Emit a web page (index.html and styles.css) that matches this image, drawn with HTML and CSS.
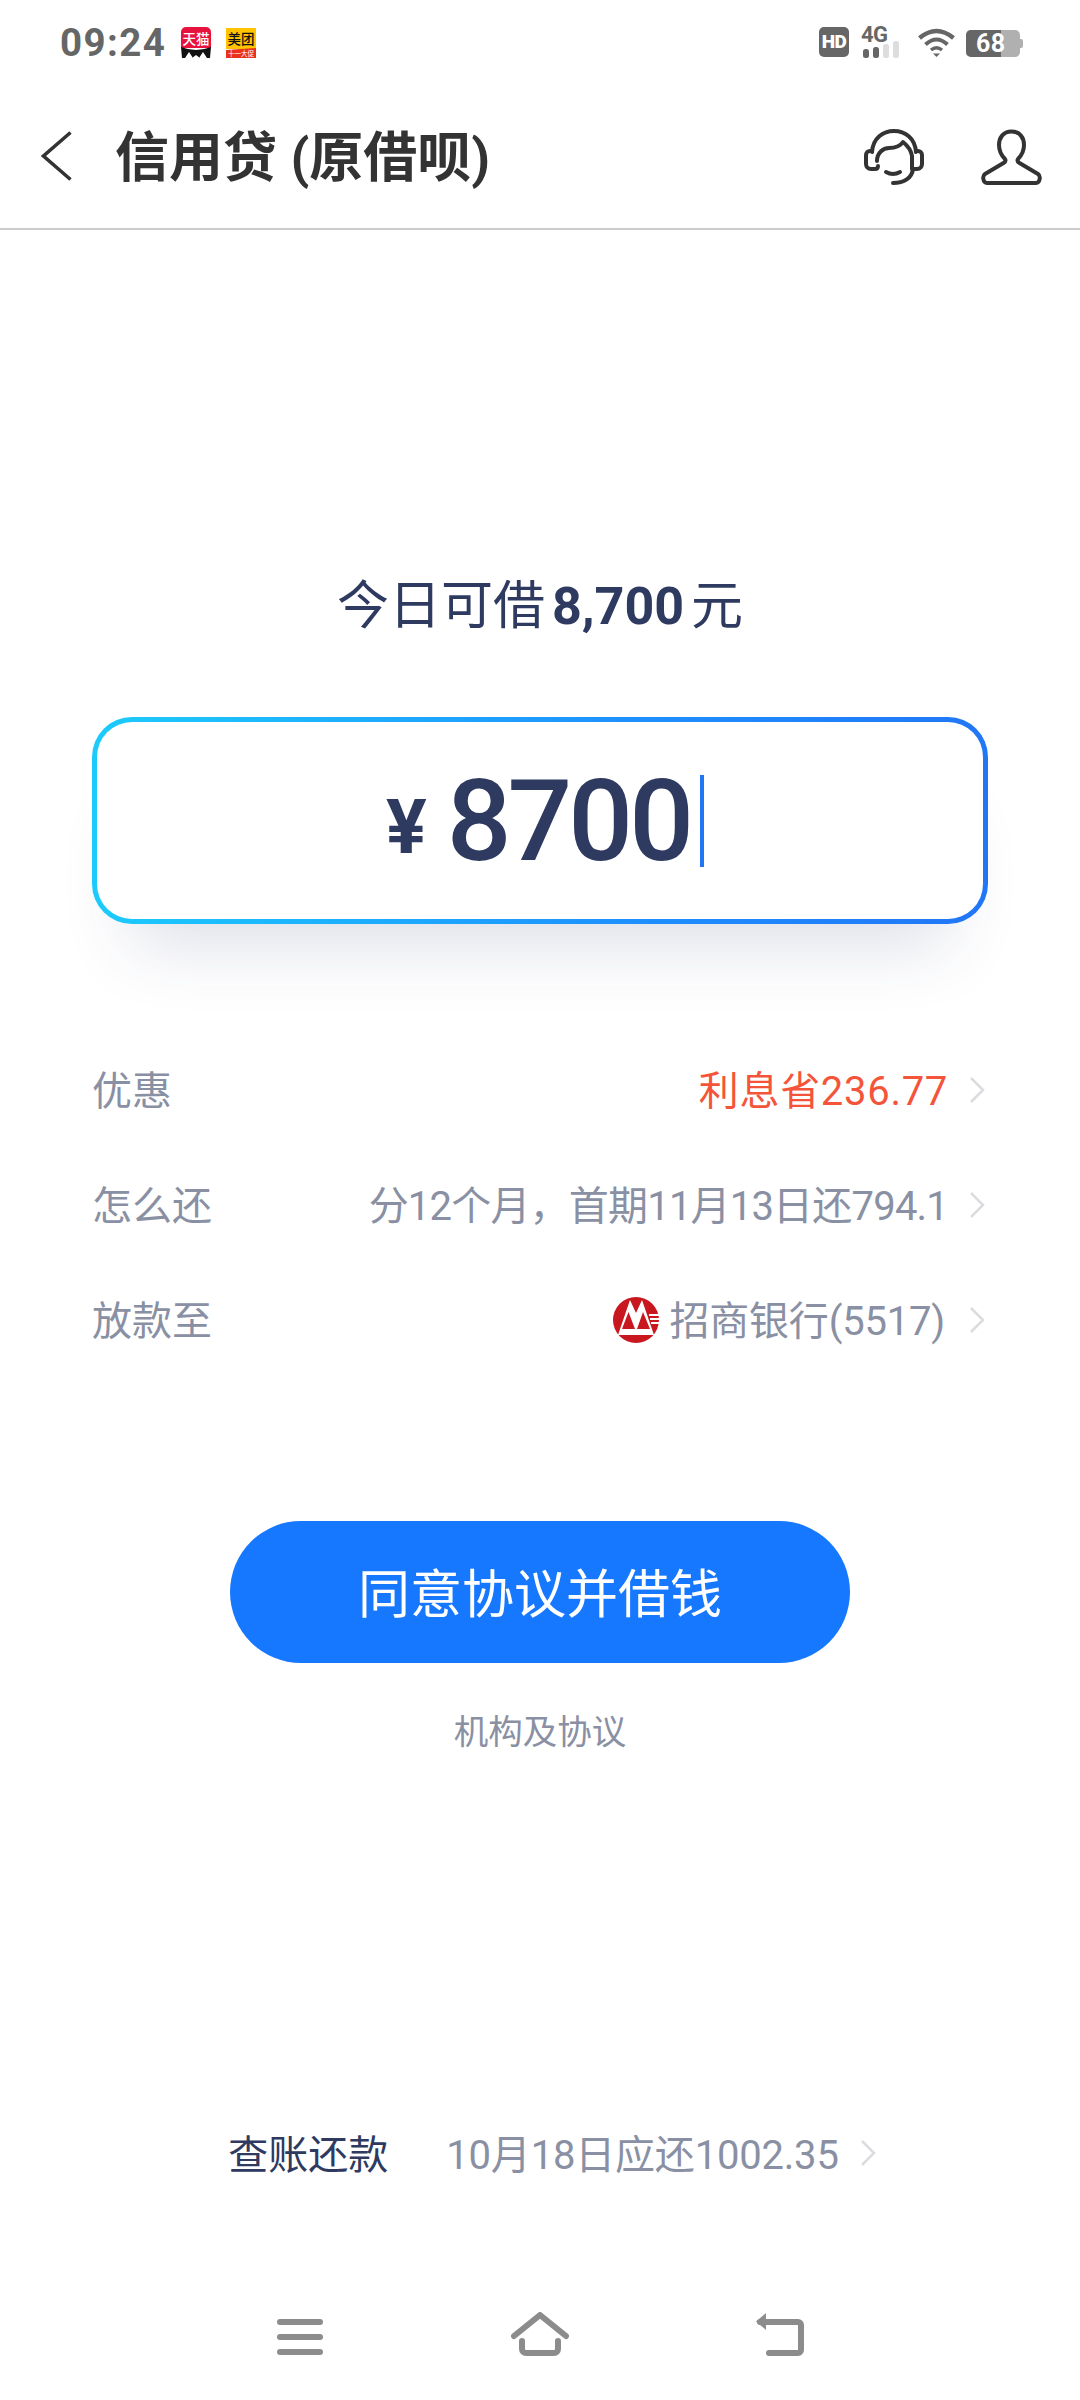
FILE: index.html
```html
<!DOCTYPE html>
<html lang="zh-CN">
<head>
<meta charset="utf-8">
<title>信用贷 (原借呗)</title>
<link rel="stylesheet" href="styles.css">
</head>
<body>
<div class="page">
  <div class="status">
    <div class="status-left">
      <span class="time">09:24</span>
      <svg class="app-tmall" viewBox="0 0 30 31"><path d="M5 0h20a5 5 0 0 1 5 5v16H0V5a5 5 0 0 1 5-5z" fill="#e8123f"/><path d="M0 20q15 6 30 0l-1 11H1z" fill="#111"/><path d="M4 31l4-6 4 6zM11 31h8l-4-3zM18 31l4-6 4 6z" fill="#fff"/><text x="15" y="17" class="app-text" fill="#fff">天猫</text></svg>
      <svg class="app-meituan" viewBox="0 0 30 30"><rect width="30" height="21" fill="#ffc300"/><path d="M0 22l30-2v10H0z" fill="#e8321c"/><text x="15" y="16" class="app-text" fill="#111">美团</text><text x="15" y="28" class="app-sub" fill="#fff">十一大促</text></svg>
    </div>
    <div class="status-right">
      <span class="hd">HD</span>
      <div class="net">
        <span class="net-label">4G</span>
        <svg class="net-bars" viewBox="0 0 36 17"><rect x="0" y="8" width="6" height="9" rx="2.500" fill="#666"/><rect x="10" y="6" width="6" height="11" rx="2.500" fill="#666"/><rect x="20" y="3" width="6" height="14" rx="2.500" fill="#ddd"/><rect x="30" y="0" width="6" height="17" rx="2.500" fill="#ddd"/></svg>
      </div>
      <svg class="wifi" viewBox="0 0 37 29"><path d="M1.500 10Q18.500-4 35.500 10" fill="none" stroke="#666" stroke-width="4.500"/><path d="M7.500 16.500Q18.500 6.500 29.500 16.500" fill="none" stroke="#666" stroke-width="4"/><path d="M13 22q5.500-4.500 11 0" fill="none" stroke="#666" stroke-width="3.500"/><path d="M15 25.500h7l-3.500 3.500z" fill="#666"/></svg>
      <div class="battery"><span class="battery-level"></span><span class="battery-num">68</span><span class="battery-cap"></span></div>
    </div>
  </div>

  <header class="topbar">
    <svg class="back" viewBox="0 0 31 50"><path d="M29.500 1.500L2.500 25l27 23.500" fill="none" stroke="#333" stroke-width="3.500"/></svg>
    <h1 class="title">信用贷 (原借呗)</h1>
    <div class="top-actions">
      <svg class="top-icon" viewBox="0 0 60 56"><g fill="none" stroke="#333" stroke-width="4" stroke-linecap="round" stroke-linejoin="round"><path d="M8 23C9 9 19 2 30 2s21 7 22 21"/><path d="M8 22H6a4 4 0 0 0-4 4v9a5 5 0 0 0 5 5h4c2 0 3-1 3-3"/><path d="M52 22h2a4 4 0 0 1 4 4v9a5 5 0 0 1-5 5h-5V27c-1-6-4-10-9-14-2 3-7 6-14 6-6 0-12 5-12 13"/><path d="M22 43q7 4 14 0"/><path d="M49 40c-1 9-9 14-20 14"/></g></svg>
      <svg class="top-icon user" viewBox="0 0 61 56"><path d="M30.500 2.500C22 2.500 18 9 18 16c0 6 3 11 6 14 1 1.500 0 3-1.500 4L4 45c-3 2-2 9 2 9h49c4 0 5-7 2-9L38.500 34c-1.500-1-2.500-2.500-1.500-4 3-3 6-8 6-14 0-7-4-13.500-12.500-13.500z" fill="none" stroke="#333" stroke-width="4" stroke-linejoin="round"/></svg>
    </div>
  </header>

  <main class="main">
    <p class="tip">今日可借<b class="tip-num">8,700</b>元</p>

    <div class="amount-box">
      <span class="yen">¥</span><span class="amount">8700</span><span class="cursor"></span>
    </div>

    <div class="rows">
      <div class="row">
        <span class="row-label">优惠</span>
        <span class="row-value red">利息省236.77</span>
        <svg class="chev" viewBox="0 0 16 28"><path d="M2 2l12 12L2 26" fill="none" stroke="#dcdce0" stroke-width="2.500"/></svg>
      </div>
      <div class="row">
        <span class="row-label">怎么还</span>
        <span class="row-value tight">分12个月，首期11月13日还794.1</span>
        <svg class="chev" viewBox="0 0 16 28"><path d="M2 2l12 12L2 26" fill="none" stroke="#dcdce0" stroke-width="2.500"/></svg>
      </div>
      <div class="row">
        <span class="row-label">放款至</span>
        <svg class="bank" viewBox="0 0 46 46"><circle cx="23" cy="23" r="23" fill="#c8171e"/><path d="M5 38L17 3l6 13 6-13 12 35z" fill="#fff"/><path d="M9 32l6.500-17L22 32zM24 32l6-17 7 17z" fill="#c8171e"/><path d="M36 17h10v2H36zM37 21h9v2h-9zM38 25h8v2h-8z" fill="#fff"/></svg>
        <span class="row-value bank-name">招商银行(5517)</span>
        <svg class="chev" viewBox="0 0 16 28"><path d="M2 2l12 12L2 26" fill="none" stroke="#dcdce0" stroke-width="2.500"/></svg>
      </div>
    </div>

    <button class="cta">同意协议并借钱</button>
    <p class="agreement">机构及协议</p>

    <div class="repay">
      <span class="repay-label">查账还款</span>
      <span class="repay-value">10月18日应还1002.35</span>
      <svg class="chev" viewBox="0 0 16 28"><path d="M2 2l12 12L2 26" fill="none" stroke="#dcdce0" stroke-width="2.500"/></svg>
    </div>
  </main>

  <nav class="sysnav">
    <svg class="nav-icon" viewBox="0 0 58 44"><g fill="#8c8c8c"><rect x="6" y="7" width="46" height="6" rx="3"/><rect x="6" y="22" width="46" height="6" rx="3"/><rect x="6" y="37" width="46" height="6" rx="3"/></g></svg>
    <svg class="nav-icon" viewBox="0 0 58 44"><g fill="none" stroke="#8c8c8c" stroke-width="6" stroke-linecap="round" stroke-linejoin="round"><path d="M3 24L29 3l26 21"/><path d="M11 29v8a4 4 0 0 0 4 4h28a4 4 0 0 0 4-4v-8"/></g></svg>
    <svg class="nav-icon" viewBox="0 0 58 44"><path d="M9 10h38a3 3 0 0 1 3 3v25a3 3 0 0 1-3 3H18" fill="none" stroke="#8c8c8c" stroke-width="6" stroke-linecap="round" stroke-linejoin="round"/><path d="M5 9.500L15 1v17z" fill="#8c8c8c"/></svg>
  </nav>
</div>
</body>
</html>
```
FILE: styles.css
```css
* { box-sizing: border-box; }
html, body { margin: 0; padding: 0; background: #fff; }
body { font-family: Roboto, "Noto Sans CJK SC", sans-serif; }
.page { width: 1080px; height: 2400px; display: flex; flex-direction: column; overflow: hidden; }

.status { height: 88px; padding: 27px 60px 0 60px; display: flex; justify-content: space-between; align-items: flex-start; }
.status-left { display: flex; align-items: center; height: 31px; }
.time { font-size: 38.5px; font-weight: 700; color: #666; line-height: 31px; letter-spacing: 1.4px; width: 121px; }
.app-tmall { width: 30px; height: 31px; }
.app-meituan { width: 30px; height: 30px; margin-left: 15px; }
.app-text { font-size: 13.5px; text-anchor: middle; font-family: "Noto Sans CJK SC", sans-serif; font-weight: 500; }
.app-sub { font-size: 6.5px; text-anchor: middle; font-family: "Noto Sans CJK SC", sans-serif; }
.status-right { display: flex; align-items: flex-start; }
.hd { width: 30px; height: 30px; background: #666; color: #fff; border-radius: 5px; font-size: 19px; font-weight: 900; line-height: 30px; text-align: center; letter-spacing: -0.5px; }
.net { width: 36px; margin-left: 12px; height: 31px; display: flex; flex-direction: column; }
.net-label { font-size: 22px; font-weight: 700; color: #666; line-height: 16px; letter-spacing: -0.5px; }
.net-bars { width: 36px; height: 17px; margin-top: -2px; margin-left: 2px; }
.wifi { width: 37px; height: 29px; margin-left: 21px; margin-top: 1px; }
.battery { width: 54px; height: 27px; margin-left: 11px; margin-top: 3px; background: #b0b0b0; border-radius: 5px; position: relative; }
.battery-level { position: absolute; left: 0; top: 0; bottom: 0; width: 35px; background: #666; border-radius: 5px 0 0 5px; }
.battery-num { position: absolute; left: 10px; top: 0; line-height: 27px; font-size: 25px; font-weight: 700; color: #fff; letter-spacing: 0.5px; }
.battery-cap { position: absolute; right: -3px; top: 9px; width: 3px; height: 9px; background: #b0b0b0; border-radius: 0 2px 2px 0; }

.topbar { height: 142px; border-bottom: 2px solid #ccc; padding: 0 38px 0 41px; display: flex; align-items: center; }
.back { width: 31px; height: 50px; margin-bottom: 4px; }
.title { margin: 2px 0 0 43px; font-size: 54px; font-weight: 700; line-height: 60px; color: #333; flex: 1; }
.top-actions { display: flex; gap: 57px; margin-bottom: 2px; }
.top-icon { width: 60px; height: 56px; }
.top-icon.user { width: 61px; }

.main { flex: 1; display: flex; flex-direction: column; align-items: center; }
.tip { margin: 347px 0 0; font-size: 52px; line-height: 60px; color: #2e3a5f; font-weight: 400; }
.tip-num { font-size: 52px; font-weight: 700; margin: 0 7px; }

.amount-box { width: 896px; height: 207px; margin-top: 80px; border: 5px solid transparent; border-radius: 40px; background: linear-gradient(#fff, #fff) padding-box, linear-gradient(90deg, #1ccbfb 0%, #1e90ff 60%, #2176f5 100%) border-box; box-shadow: 0 60px 70px -40px rgba(46, 58, 110, 0.16); display: flex; align-items: center; justify-content: center; color: #2e3a5f; padding-left: 10px; }
.yen { font-size: 76px; font-weight: 700; line-height: 1; margin-top: 12px; }
.amount { font-size: 114px; font-weight: 500; line-height: 1; margin-left: 20px; letter-spacing: -4px; }
.cursor { width: 4px; height: 92px; background: #2176f5; margin-left: 10px; }

.rows { width: 100%; margin-top: 108px; padding: 0 95px 0 92px; display: flex; flex-direction: column; }
.row { height: 115px; display: flex; align-items: center; font-size: 40px; color: #8a90a3; }
.row-label { flex: 1; margin-bottom: 3px; }
.row-value { margin-bottom: 3px; }
.red { color: #f4553a; letter-spacing: 0.7px; }
.tight { letter-spacing: -0.8px; }
.bank-name { letter-spacing: -0.2px; margin-right: 3px; }
.chev { width: 16px; height: 28px; margin-left: 21px; }
.bank { width: 46px; height: 46px; margin-right: 10px; }
.cta { width: 620px; height: 142px; margin-top: 144px; border: 0; border-radius: 71px; background: #1677ff; color: #fff; font-family: inherit; font-size: 52px; padding: 0 0 3px; }
.agreement { margin: 44px 0 0; font-size: 34.5px; line-height: 50px; color: #8a90a3; }

.repay { margin-top: 366px; margin-left: 24px; height: 60px; display: flex; align-items: center; font-size: 40px; }
.repay-label { color: #2e3a5f; margin-bottom: 3px; }
.repay-value { color: #8a90a3; margin: 0 0 3px 58px; letter-spacing: -0.2px; }

.sysnav { height: 88px; display: grid; grid-template-columns: repeat(3, 240px); justify-content: center; justify-items: center; align-items: start; }
.nav-icon { height: 44px; width: 58px; }
```
